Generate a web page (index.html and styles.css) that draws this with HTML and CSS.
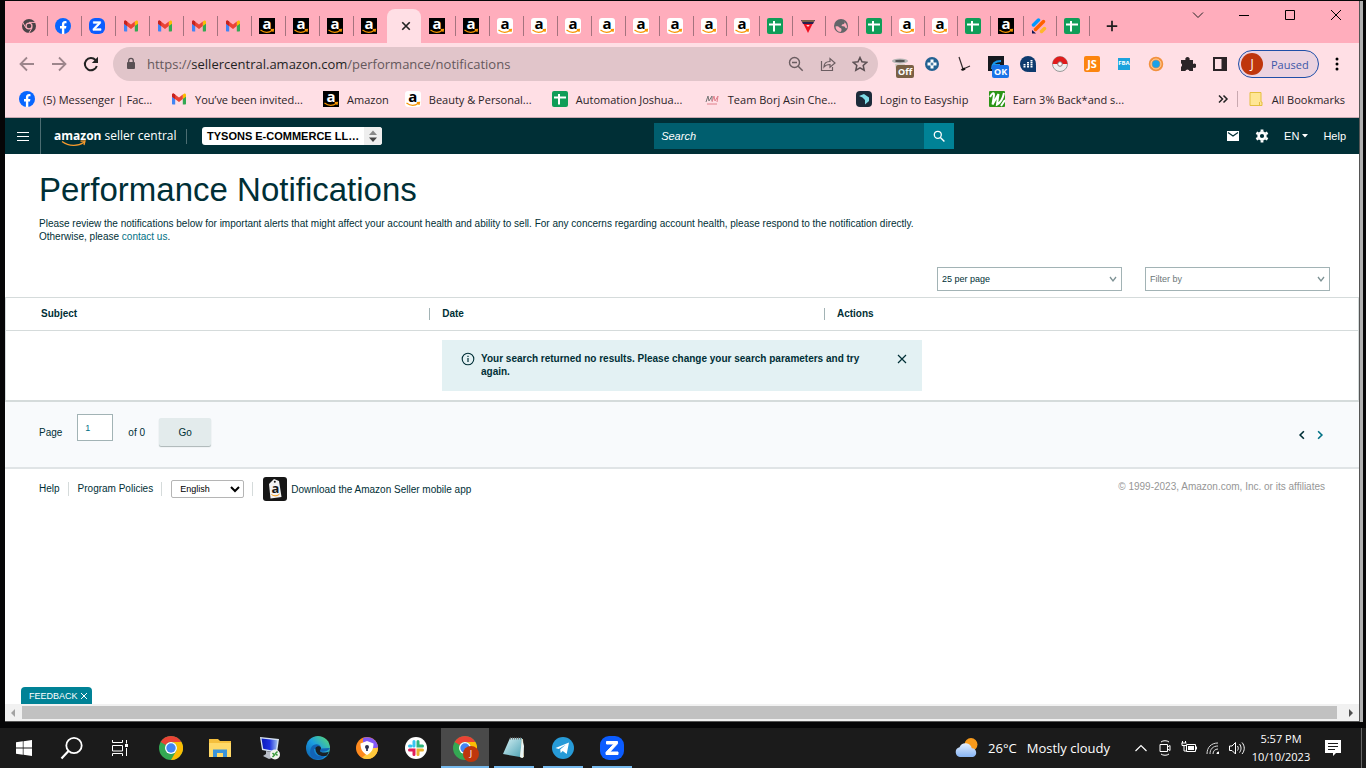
FILE: index.html
```html
<!DOCTYPE html>
<html lang="en">
<head>
<meta charset="utf-8">
<title>Performance Notifications</title>
<link rel="stylesheet" href="styles.css">
</head>
<body>
<svg class="sprite" aria-hidden="true">
  <defs>
    <linearGradient id="g-edge" x1="0" y1="1" x2="1" y2="0"><stop offset="0" stop-color="#0c59a4"/><stop offset=".5" stop-color="#1b9de2"/><stop offset="1" stop-color="#5fe06a"/></linearGradient>
    <linearGradient id="g-cloud" x1="0" y1="0" x2="0" y2="1"><stop offset="0" stop-color="#e4efff"/><stop offset="1" stop-color="#86b4f4"/></linearGradient>
    <linearGradient id="g-screen" x1="0" y1="0" x2="1" y2="0"><stop offset="0" stop-color="#0a1bb8"/><stop offset=".5" stop-color="#1b2fe0"/><stop offset="1" stop-color="#9fc0f0"/></linearGradient>
    <linearGradient id="g-note" x1="0" y1="0" x2="1" y2="1"><stop offset="0" stop-color="#d7f2f5"/><stop offset="1" stop-color="#4fa3b5"/></linearGradient>
  </defs>
  <symbol id="chrome-gray" viewBox="0 0 16 16"><circle cx="8" cy="8" r="7" fill="#4a4347"/><circle cx="8" cy="8" r="3.6" fill="#ffadbc"/><circle cx="8" cy="8" r="2.3" fill="#4a4347"/><path d="M8 4.4h7M4.9 9.8 1.5 4M11.1 9.8 7.7 15.4" stroke="#ffadbc" stroke-width="1"/></symbol>
  <symbol id="facebook" viewBox="0 0 16 16"><circle cx="8" cy="8" r="8" fill="#0866ff"/><path d="M6.9 16V10.400H5V8h1.900V6.700C6.900 4.200 8 3 10.200 3c.5 0 1 .1 1.300.2v2.100h-.9c-1 0-1.300.4-1.300 1.400V8h2.100l-.4 2.400H9.300V16z" fill="#fff"/></symbol>
  <symbol id="zoom-logo" viewBox="0 0 24 24"><rect width="24" height="24" rx="9" fill="#0b5cff"/><path d="M6.500 5.500h11v2.200L9.800 16H18v2.500H6v-2.200L13.800 8H6.500z" fill="#fff" stroke="#fff" stroke-linejoin="round"/></symbol>
  <symbol id="gmail" viewBox="0 0 16 16"><path d="M1 4v8.500c0 .6.400 1 1 1h2.200V7z" fill="#4285f4"/><path d="M15 4v8.500c0 .6-.4 1-1 1h-2.200V7z" fill="#34a853"/><path d="M11.800 3.600 13 2.800c.9-.6 2 0 2 1.200v1.700l-3.200 2.400z" fill="#fbbc04"/><path d="M1 4c0-1.200 1.100-1.800 2-1.200L8 6.600l3.800-3v4.500L8 11 1 5.700z" fill="#ea4335"/><path d="M1 4c0-1.200 1.100-1.800 2-1.200l1.200.8v4.500L1 5.700z" fill="#c5221f"/></symbol>
  <symbol id="smile" viewBox="0 0 16 16"><path d="M1.500 12c4 3 8.500 2.800 12 .2M11.800 11.700l2.600-.2-.5 2.300" fill="none" stroke="currentColor" stroke-width="1.300"/></symbol>
  <symbol id="sheets" viewBox="0 0 16 16"><rect width="16" height="16" rx="2" fill="#0f9d58"/><path d="M2 6.500h12M7 3v10.500" stroke="#fff" stroke-width="2"/></symbol>
  <symbol id="tri" viewBox="0 0 16 16"><path d="M1 2h14l-2 4H3z" fill="#282050"/><path d="M2 3h12" stroke="#caa23a"/><path d="M3.500 6 8 15l4.500-9z" fill="#f01020"/><path d="m6.200 7 1.800 2 1.800-2z" fill="#ffd5dc"/></symbol>
  <symbol id="globe" viewBox="0 0 16 16"><circle cx="8" cy="8" r="7" fill="#636569"/><path d="M2.500 8.500c2-.5 3 0 4 1s2 .5 2 2-.5 2-1 2.500c-3-.3-5-2.500-5-5.500zM8.500 2.500l3.500 1.600-1 2-2 .4-.5 1.500 3 .4 1.500 2 1-1c0-3-2-6-5.500-6.900z" fill="#ffadbc"/></symbol>
  <symbol id="jot" viewBox="0 0 16 16"><path d="M2.500 7 7.500 2" stroke="#0099ff" stroke-width="3.500" stroke-linecap="round"/><path d="m4.500 11.500 8-8" stroke="#ff6100" stroke-width="3.500" stroke-linecap="round"/><path d="m10.500 13.500 3-3" stroke="#ffb629" stroke-width="3.500" stroke-linecap="round"/><path d="M1 12v3.500h4z" fill="#0a1551"/></symbol>
  <symbol id="borj" viewBox="0 0 16 16"><path d="m2 11 2-6 1 5 3-5v5" fill="none" stroke="#777" stroke-width="1"/><path d="m8 11 2-6 1 5 3-5-1 6M3 13h10" fill="none" stroke="#e0808c" stroke-width="1"/></symbol>
  <symbol id="easyship" viewBox="0 0 16 16"><rect width="16" height="16" rx="4" fill="#1c2b3a"/><path d="m3 5 5-2 5 3.500V10l-4 3.500V9L6.500 6.500z" fill="#7fdbe6"/></symbol>
  <symbol id="earn" viewBox="0 0 16 16"><rect width="16" height="16" rx="1" fill="#2b9416"/><path d="M1 6c2-4 4-5 4-2L3.500 13.500 9.500 3 8 13.500c4-2 6-7 7-11.500M12 15l4-6" fill="none" stroke="#fff" stroke-width="2"/></symbol>
  <symbol id="folder-y" viewBox="0 0 14 16"><path d="M1 1.500h11V11h1v3.500H1z" fill="#ffe694" stroke="#e4bf3f"/><path d="M10.500 11v3.500" stroke="#e4bf3f"/></symbol>
  <symbol id="x" viewBox="0 0 16 16"><path d="m3 3 10 10M13 3 3 13" fill="none" stroke="currentColor" stroke-width="2.200"/></symbol>
  <symbol id="chrome" viewBox="0 0 24 24"><circle cx="12" cy="12" r="12" fill="#34a853"/><path d="M12 0a12 12 0 0 1 10.400 6H12a6 6 0 0 0-5.200 3L1.600 6A12 12 0 0 1 12 0z" fill="#ea4335"/><path d="M22.400 6A12 12 0 0 1 12 24l5.200-9A6 6 0 0 0 12 6z" fill="#fbbc04"/><circle cx="12" cy="12" r="6" fill="#fff"/><circle cx="12" cy="12" r="4.700" fill="#4285f4"/></symbol>
</svg>

<div class="desktop">
  <div class="window">
    <header class="tabstrip">
      <nav class="tabs" aria-label="Tabs">
        <button class="tab first" aria-label="Chrome"><svg><use href="#chrome-gray"/></svg></button>
        <button class="tab" aria-label="Facebook"><svg><use href="#facebook"/></svg></button>
        <button class="tab" aria-label="Zoom"><svg><use href="#zoom-logo"/></svg></button>
        <button class="tab" aria-label="Gmail"><svg><use href="#gmail"/></svg></button>
        <button class="tab" aria-label="Gmail"><svg><use href="#gmail"/></svg></button>
        <button class="tab" aria-label="Gmail"><svg><use href="#gmail"/></svg></button>
        <button class="tab" aria-label="Gmail"><svg><use href="#gmail"/></svg></button>
        <button class="tab" aria-label="Amazon"><span class="amz dark">a<svg><use href="#smile"/></svg></span></button>
        <button class="tab" aria-label="Amazon"><span class="amz dark">a<svg><use href="#smile"/></svg></span></button>
        <button class="tab" aria-label="Amazon"><span class="amz dark">a<svg><use href="#smile"/></svg></span></button>
        <button class="tab" aria-label="Amazon"><span class="amz dark">a<svg><use href="#smile"/></svg></span></button>
        <button class="tab active" aria-label="Close tab"><svg><use href="#x"/></svg></button>
        <button class="tab first" aria-label="Amazon"><span class="amz dark">a<svg><use href="#smile"/></svg></span></button>
        <button class="tab" aria-label="Amazon"><span class="amz dark">a<svg><use href="#smile"/></svg></span></button>
        <button class="tab" aria-label="Amazon"><span class="amz">a<svg><use href="#smile"/></svg></span></button>
        <button class="tab" aria-label="Amazon"><span class="amz">a<svg><use href="#smile"/></svg></span></button>
        <button class="tab" aria-label="Amazon"><span class="amz">a<svg><use href="#smile"/></svg></span></button>
        <button class="tab" aria-label="Amazon"><span class="amz">a<svg><use href="#smile"/></svg></span></button>
        <button class="tab" aria-label="Amazon"><span class="amz">a<svg><use href="#smile"/></svg></span></button>
        <button class="tab" aria-label="Amazon"><span class="amz">a<svg><use href="#smile"/></svg></span></button>
        <button class="tab narrow" aria-label="Amazon"><span class="amz">a<svg><use href="#smile"/></svg></span></button>
        <button class="tab narrow" aria-label="Amazon"><span class="amz">a<svg><use href="#smile"/></svg></span></button>
        <button class="tab narrow" aria-label="Sheet"><svg><use href="#sheets"/></svg></button>
        <button class="tab narrow" aria-label="Tool"><svg><use href="#tri"/></svg></button>
        <button class="tab narrow" aria-label="Page"><svg><use href="#globe"/></svg></button>
        <button class="tab narrow" aria-label="Sheet"><svg><use href="#sheets"/></svg></button>
        <button class="tab narrow" aria-label="Amazon"><span class="amz">a<svg><use href="#smile"/></svg></span></button>
        <button class="tab narrow" aria-label="Amazon"><span class="amz">a<svg><use href="#smile"/></svg></span></button>
        <button class="tab narrow" aria-label="Sheet"><svg><use href="#sheets"/></svg></button>
        <button class="tab narrow" aria-label="Amazon"><span class="amz dark">a<svg><use href="#smile"/></svg></span></button>
        <button class="tab narrow" aria-label="Form"><svg><use href="#jot"/></svg></button>
        <button class="tab narrow" aria-label="Sheet"><svg><use href="#sheets"/></svg></button>
        <button class="newtab" aria-label="New tab"><svg viewBox="0 0 16 16"><path d="M8 2v12M2 8h12" stroke="#1f1f1f" stroke-width="2"/></svg></button>
      </nav>
      <div class="controls">
        <button aria-label="Search tabs"><svg viewBox="0 0 12 12"><path d="m1 3.500 5 5 5-5" fill="none" stroke="#222"/></svg></button>
        <button aria-label="Minimize"><svg viewBox="0 0 12 12"><path d="M1 6.500h10" stroke="#000"/></svg></button>
        <button aria-label="Maximize"><svg viewBox="0 0 12 12"><path d="M1.500 1.500h9v9h-9z" fill="none" stroke="#000"/></svg></button>
        <button aria-label="Close"><svg viewBox="0 0 12 12"><path d="m1 1 10 10M11 1 1 11" stroke="#000"/></svg></button>
      </div>
    </header>

    <div class="toolbar">
      <div class="nav-btns">
        <button aria-label="Back" class="dim"><svg viewBox="0 0 16 16"><path d="M15 8H2M8 1.500 1.500 8 8 14.500" fill="none" stroke="currentColor" stroke-width="1.800"/></svg></button>
        <button aria-label="Forward" class="dim"><svg viewBox="0 0 16 16"><path d="M1 8h13M8 1.500 14.500 8 8 14.500" fill="none" stroke="currentColor" stroke-width="1.800"/></svg></button>
        <button aria-label="Reload"><svg viewBox="0 0 16 16"><path d="M13.800 10A6.100 6.100 0 1 1 12.500 4L14 5.700" fill="none" stroke="currentColor" stroke-width="2"/><path d="M15 .800v6.200H8.800z" fill="currentColor"/></svg></button>
      </div>
      <div class="omnibox">
        <svg class="lock" viewBox="0 0 10 14"><rect x="1" y="5" width="8" height="7" rx="1" fill="#5a5054"/><path d="M2.700 6V3.700a2.300 2.300 0 0 1 4.600 0V6" fill="none" stroke="#5a5054" stroke-width="1.300"/></svg>
        <div class="url">https://<b>sellercentral.amazon.com</b>/performance/notifications</div>
        <button aria-label="Zoom"><svg viewBox="0 0 16 16"><circle cx="6.500" cy="6.500" r="5" fill="none" stroke="#6b5d61" stroke-width="1.400"/><path d="M4 6.500h5M10.200 10.200l4.500 4.500" stroke="#6b5d61" stroke-width="1.500"/></svg></button>
        <button aria-label="Share"><svg viewBox="0 0 16 16"><path d="M1.500 5v9.500h11V11M4 11c0-4 2.500-5.500 6-5.500V2.500L15 7l-5 4.300V8.500C7 8.500 5.500 9 4 11z" fill="none" stroke="#6b5d61" stroke-width="1.200"/></svg></button>
        <button aria-label="Bookmark"><svg viewBox="0 0 16 16"><path d="m8 1.500 2 4.300 4.700.5-3.500 3.200 1 4.700L8 11.800l-4.200 2.400 1-4.700L1.300 6.300 6 5.800z" fill="none" stroke="#5b4f53" stroke-width="1.500"/></svg></button>
      </div>
      <div class="exts">
        <button aria-label="Off"><svg viewBox="0 0 16 16"><ellipse cx="8" cy="5" rx="8" ry="2.500" fill="#b5b5b5"/><ellipse cx="8" cy="5" rx="5" ry="1.200" fill="#555"/><path d="M3 8h10l-1 7H4z" fill="#d5d0c8"/></svg><span class="badge off">Off</span></button>
        <button aria-label="Helium"><svg viewBox="0 0 16 16"><circle cx="8" cy="8" r="7" fill="#236192"/><path d="M8 3.500v9M3.500 8h9" stroke="#fff" stroke-width="3"/><path d="M8 6.500v3M6.500 8h3" stroke="#236192" stroke-width="1.200"/></svg></button>
        <button aria-label="Keepa"><svg viewBox="0 0 16 16"><path d="m3 1 4 12M5 14l9-4" stroke="#332b2e" fill="none" stroke-width="1.200"/><path d="m6 14 3-1.500" stroke="#111" stroke-width="2.500"/></svg></button>
        <button aria-label="OK"><svg viewBox="0 0 16 16"><path d="M0 0h16v15H0z" fill="#16191f"/><path d="M4 13c0-5 3-8 9-8M6 9h6" fill="none" stroke="#1797ee" stroke-width="2"/></svg><span class="badge ok">OK</span></button>
        <button aria-label="Market data"><svg viewBox="0 0 16 16"><circle cx="8" cy="8" r="8" fill="#0e3a6e"/><path d="M9 9h7v7H9z" fill="#0e3a6e"/><path d="M4.500 8v4M8 6v6M11.500 4v8" stroke="#fff" stroke-width="2" stroke-dasharray="1.500 .5"/></svg></button>
        <button aria-label="Monitor"><svg viewBox="0 0 16 16"><circle cx="8" cy="8" r="7.500" fill="#eee" stroke="#999"/><path d="M.500 8a7.500 7.500 0 0 1 15 0z" fill="#e01c1c"/><circle cx="8" cy="8" r="2.300" fill="#fff" stroke="#8c7777"/></svg></button>
        <button aria-label="JS"><span class="sq js">JS</span></button>
        <button aria-label="FBA"><span class="sq fba">FBA</span></button>
        <button aria-label="Orb"><svg viewBox="0 0 16 16"><circle cx="8" cy="8" r="5.500" fill="#1ba1e8" stroke="#f2913d" stroke-width="3.500"/><circle cx="8" cy="8" r="5" fill="none" stroke="#ffd0a0"/></svg></button>
        <button aria-label="Extensions"><svg viewBox="0 0 16 16"><path d="M1 4h4.500a2.200 2.200 0 1 1 4 0H13v4a2.200 2.200 0 1 1 0 3.500V15H9.500a2.200 2.200 0 0 0-4.200 0H1v-4a2.200 2.200 0 0 0 0-3.800z" fill="#2b2427"/></svg></button>
        <button aria-label="Side panel"><svg viewBox="0 0 16 16"><path d="M2 2h12v12H2z" fill="#ffdfe5" stroke="#2b2427" stroke-width="2"/><path d="M9.500 2H14v12H9.500z" fill="#2b2427"/></svg></button>
      </div>
      <button class="profile"><span class="avatar">J</span><span>Paused</span></button>
      <button class="menu" aria-label="Menu"><svg viewBox="0 0 16 16"><circle cx="8" cy="3" r="1.500"/><circle cx="8" cy="8" r="1.500"/><circle cx="8" cy="13" r="1.500"/></svg></button>
    </div>

    <nav class="bookmarks" aria-label="Bookmarks">
      <a href="#"><svg><use href="#facebook"/></svg><span class="wide">(5) Messenger | Fac...</span></a>
      <a href="#"><svg><use href="#gmail"/></svg><span class="wide">You’ve been invited...</span></a>
      <a href="#"><span class="amz dark">a<svg><use href="#smile"/></svg></span><span>Amazon</span></a>
      <a href="#"><span class="amz">a<svg><use href="#smile"/></svg></span><span class="mid">Beauty &amp; Personal...</span></a>
      <a href="#"><svg><use href="#sheets"/></svg><span class="wide">Automation Joshua...</span></a>
      <a href="#"><svg><use href="#borj"/></svg><span class="wide">Team Borj Asin Che...</span></a>
      <a href="#"><svg><use href="#easyship"/></svg><span class="short">Login to Easyship</span></a>
      <a href="#"><svg><use href="#earn"/></svg><span>Earn 3% Back*and s...</span></a>
      <button class="more" aria-label="More bookmarks"><svg viewBox="0 0 16 16"><path d="m4 4.500 3.500 3.500L4 11.500M8.500 4.500 12 8l-3.500 3.500" fill="none" stroke="#222" stroke-width="1.500"/></svg></button>
      <a href="#" class="all"><svg><use href="#folder-y"/></svg><span>All Bookmarks</span></a>
    </nav>

    <div class="page">
      <header class="sc-head">
        <button class="burger" aria-label="Menu"><svg viewBox="0 0 12 12"><path d="M0 2.500h12M0 6.500h12M0 10.500h12" stroke="#fff"/></svg></button>
        <a href="#" class="logo"><span><b>amazon</b> seller central</span><svg viewBox="0 0 26 8"><path d="M1 1.500c7 5 16 5 22 .8M19.500 1.200l4.500-.2-1 4" fill="none" stroke="#f79a2c" stroke-width="1.300"/></svg></a>
        <button class="account"><span>TYSONS E-COMMERCE LL…</span><svg viewBox="0 0 18 18"><path d="M0 0h18v18H0z" fill="#eee"/><path d="M5 8h8L9 3.500z" fill="#888"/><path d="M5 10.500h8L9 15z" fill="#444"/></svg></button>
        <form class="search"><input type="text" placeholder="Search" aria-label="Search"><button type="button" aria-label="Search"><svg viewBox="0 0 12 12"><circle cx="4.800" cy="4.800" r="3.500" fill="none" stroke="#fff" stroke-width="1.300"/><path d="m7.400 7.400 4 4" stroke="#fff" stroke-width="1.400"/></svg></button></form>
        <nav class="tools">
          <a href="#" aria-label="Messages"><svg viewBox="0 0 14 14"><path d="M1 2h12v10H1z" fill="#fff"/><path d="m2 3.500 5 3.500 5-3.500" fill="none" stroke="#002f36" stroke-width="1.200"/></svg></a>
          <a href="#" aria-label="Settings"><svg viewBox="0 0 14 14"><circle cx="7" cy="7" r="3.400" fill="none" stroke="#fff" stroke-width="2.600"/><path d="M7 .500v2.200M7 11.300v2.200M1.400 3.700l1.900 1.100M10.700 9.200l1.900 1.100M1.400 10.300l1.900-1.100M10.700 4.800l1.900-1.100" stroke="#fff" stroke-width="2.800"/></svg></a>
          <a href="#" class="lang">EN<svg viewBox="0 0 6 4"><path d="M0 0h6L3 3.500z" fill="#fff"/></svg></a>
          <a href="#">Help</a>
        </nav>
      </header>

      <main>
        <h1>Performance Notifications</h1>
        <p class="intro">Please review the notifications below for important alerts that might affect your account health and ability to sell. For any concerns regarding account health, please respond to the notification directly.<br>Otherwise, please <a href="#">contact us</a>.</p>
        <div class="filters">
          <div class="pick"><select aria-label="Page size"><option>25 per page</option></select><svg viewBox="0 0 8 8"><path d="m1 2 3 4 3-4" fill="none" stroke="#7d9194" stroke-width="1.300"/></svg></div>
          <div class="pick"><select aria-label="Filter" class="muted"><option>Filter by</option></select><svg viewBox="0 0 8 8"><path d="m1 2 3 4 3-4" fill="none" stroke="#7d9194" stroke-width="1.300"/></svg></div>
        </div>
        <table>
          <thead><tr><th class="c1"><span>Subject</span></th><th class="c2"><span>Date</span></th><th><span>Actions</span></th></tr></thead>
          <tbody><tr><td colspan="3">
            <div class="alert" role="status">
              <svg viewBox="0 0 14 14"><circle cx="7" cy="7" r="5.800" fill="none" stroke="#002f36" stroke-width="1.100"/><path d="M7 6v4M7 3.800v1.200" stroke="#002f36" stroke-width="1.200"/></svg>
              <p>Your search returned no results. Please change your search parameters and try again.</p>
              <button aria-label="Dismiss"><svg viewBox="0 0 10 10"><path d="m1 1 8 8M9 1 1 9" stroke="#002f36" stroke-width="1.200"/></svg></button>
            </div>
          </td></tr></tbody>
        </table>
        <div class="pager">
          <label for="pg">Page</label>
          <input id="pg" type="text" value="1">
          <span class="of">of 0</span>
          <button class="go">Go</button>
          <div class="arrows">
            <button aria-label="Previous"><svg viewBox="0 0 8 8"><path d="M5.500 1 2.500 4l3 3" fill="none" stroke="#002f36" stroke-width="1.300"/></svg></button>
            <button aria-label="Next"><svg viewBox="0 0 8 8"><path d="m2.500 1 3 3-3 3" fill="none" stroke="#007185" stroke-width="1.300"/></svg></button>
          </div>
        </div>
      </main>

      <footer>
        <a href="#" class="sep">Help</a>
        <a href="#" class="sep pol">Program Policies</a>
        <div class="sep lng"><select aria-label="Language"><option>English</option></select></div>
        <a href="#" class="app"><svg viewBox="0 0 24 24"><rect width="24" height="24" rx="3" fill="#161616"/><path d="M6 7 11 2l5 2 2.500 16-11 1.500z" fill="#f4f4f4"/><circle cx="11.800" cy="4.700" r="1" fill="#161616"/><text x="12.500" y="15.500" class="app-a">a</text><path d="M8.500 17.500c3 2 6 1.500 8-.5" fill="none" stroke="#f79400"/></svg>Download the Amazon Seller mobile app</a>
        <small>© 1999-2023, Amazon.com, Inc. or its affiliates</small>
      </footer>

      <button class="feedback">FEEDBACK<svg viewBox="0 0 8 8"><path d="m1 1 6 6M7 1 1 7" stroke="#fff"/></svg></button>
      <div class="hscroll">
        <svg viewBox="0 0 17 17"><path d="M10 5v8L6 9z" fill="#a3a3a3"/></svg><div class="thumb"></div><svg class="end" viewBox="0 0 17 17"><path d="M7 5v8l4-4z" fill="#505050"/></svg>
      </div>
    </div>
  </div>
  <div class="behind"></div>
</div>

<div class="taskbar">
  <div class="sys">
    <button aria-label="Start"><svg class="s16" viewBox="0 0 16 16"><path d="M0 2.300 6.800 1.300v6.300H0zM7.500 1.200 16 0v7.600H7.500zM0 8.400h6.800v6.300L0 13.700zM7.500 8.400H16V16l-8.500-1.200z" fill="#fff"/></svg></button>
    <button aria-label="Search"><svg class="s24" viewBox="0 0 24 24"><circle cx="14" cy="9.500" r="7.700" fill="none" stroke="#fff" stroke-width="1.800"/><path d="m8.500 15-7 7.500" stroke="#fff" stroke-width="2.200"/></svg></button>
    <button aria-label="Task view"><svg class="s16" viewBox="0 0 16 16"><path d="M.500 0v2.500h10V0M.500 5.500h10v5.500h-10zM.500 16v-2.500h10V16M14.500 0v3.500M14.500 8v8" fill="none" stroke="#fff"/><path d="M13 4h3v3h-3z" fill="#fff"/></svg></button>
  </div>
  <div class="apps">
    <button aria-label="Chrome"><svg class="s24"><use href="#chrome"/></svg></button>
    <button aria-label="Explorer"><svg class="s24" viewBox="0 0 24 24"><path d="M1 3h9l2 2h11v16H1z" fill="#f5bf3d"/><path d="M1 7h22v14H1z" fill="#ffd968"/><path d="M5 21v-7.500h14V21h-4v-4H9v4z" fill="#3a94db"/></svg></button>
    <button aria-label="Remote desktop"><svg class="s24" viewBox="0 0 24 24"><path d="m3 1 19 2-2 14-15-3z" fill="#d7e3f2"/><path d="m4.500 2.500 16 1.700-1.700 11-12.600-2.500z" fill="url(#g-screen)"/><path d="m9 15 5 1v3l4 2-6 2-6-3 3-2z" fill="#b9bec8"/><circle cx="18" cy="18.500" r="5" fill="#f1f4ef"/><path d="m15.500 17 2 2-2 2M20.500 15.500l-2 2 2 2" fill="none" stroke="#3a9a3a" stroke-width="1.500"/></svg></button>
    <button aria-label="Edge"><svg class="s24" viewBox="0 0 24 24"><circle cx="12" cy="12" r="12" fill="url(#g-edge)"/><path d="M8 13c0 6 5 9 12 6-3 4-8 5-12 3.500S3 15 5.500 11s9-3.500 9.500 1c0 2-1.500 2-1 3 1 1.500 8 1 10-3" fill="#1263b5"/><path d="M9.500 12c1-2.500 5-2.500 5.500 0 0 2-1.500 2-1 3.200 1.500 2 7 1.500 9 .3l-2 4c-6 2-12-1-11.500-7.500z" fill="#1a2026"/></svg></button>
    <button aria-label="VPN"><svg class="s24" viewBox="0 0 24 24"><circle cx="12" cy="12" r="11" fill="#ff8a1e"/><path d="M8 2a11 11 0 0 1 15 9l-5 3L8 6z" fill="#8359f5"/><path d="M23 12A11 11 0 0 1 7 21.800L18 12z" fill="#ffc93c"/><path d="m12 5 6.500 2.500c0 5-1.500 9-6.500 11.500-5-2.500-6.500-6.500-6.500-11.500z" fill="#fff"/><circle cx="12" cy="11" r="2" fill="#2b3150"/><path d="M12 11v4" stroke="#2b3150" stroke-width="1.800"/></svg></button>
    <button aria-label="Slack"><svg class="s24" viewBox="0 0 24 24"><circle cx="12" cy="12" r="11" fill="#fff"/><g fill="none" stroke-width="3" stroke-linecap="round"><path d="M10 5.500v4.500M5.500 10H7" stroke="#36c5f0"/><path d="M14 5.500V10h4.500" stroke="#2eb67d"/><path d="M14 18.500V14h4.500" stroke="#ecb22e"/><path d="M5.500 14H10v4.500" stroke="#e01e5a"/></g></svg></button>
    <button aria-label="Chrome window" class="run on"><svg class="s24"><use href="#chrome"/></svg><span class="mini">J</span></button>
    <button aria-label="Notepad" class="run"><svg class="s24" viewBox="0 0 24 24"><path d="m8 2 13 1 1 18-3 1z" fill="#d9c9a0"/><path d="M8 2h12l-2 19L1 18z" fill="url(#g-note)"/><path d="m20 3-2 18 3 1 1-12z" fill="#e8f5f6"/><path d="M8 2.500h12" stroke="#777" stroke-dasharray="1 1" stroke-width="2"/></svg></button>
    <button aria-label="Telegram" class="run"><svg class="s24" viewBox="0 0 24 24"><circle cx="12" cy="12" r="11" fill="#279bd8"/><path d="m4.500 12 13.500-5.500-2.300 11.500-4-3-2 2-.5-3.500 5.500-4.800-7 4.300z" fill="#fff"/></svg></button>
    <button aria-label="Zoom" class="run"><svg class="s24"><use href="#zoom-logo"/></svg></button>
  </div>
  <div class="tray">
    <button class="weather"><svg class="s24" viewBox="0 0 24 24"><circle cx="17" cy="8.500" r="6.500" fill="#f79a1c"/><path d="M6 21a5 5 0 0 1-.5-9.800 6.500 6.500 0 0 1 12.300 1A4.500 4.500 0 0 1 19 21z" fill="url(#g-cloud)"/></svg><span>26°C</span><span>Mostly cloudy</span></button>
    <button aria-label="Hidden icons"><svg class="s16" viewBox="0 0 16 16"><path d="m2.500 11 5.500-5.500 5.500 5.500" fill="none" stroke="#fff" stroke-width="1.200"/></svg></button>
    <button aria-label="Meet now"><svg class="s16" viewBox="0 0 16 16"><path d="M3 4.500h7.500v7H3zM10.500 7 13 5.500v5L10.500 9M4 2c2-1.700 6-1.700 8 0M4 14c2 1.700 6 1.700 8 0" fill="none" stroke="#fff"/></svg></button>
    <button aria-label="Battery"><svg class="s16" viewBox="0 0 16 16"><path d="M5.500 4.500h9v7h-9zM15.500 6.500v3M.500 3h5M1.500 1v2M4.500 1v2M1 3v2.500h4M3 5.500V11h2.500" fill="none" stroke="#fff"/><path d="M7 6h6v4H7z" fill="#fff"/></svg></button>
    <button aria-label="Network"><svg class="s16" viewBox="0 0 16 16"><path d="M2 14C2 7.500 6 3 13 3M5 14c0-5 3-8 8-8M8 14c0-3 2-5 5-5" fill="none" stroke="#ddd"/><path d="M11.500 14A2.500 2.500 0 0 1 14 11.500V14z" fill="#fff"/></svg></button>
    <button aria-label="Volume"><svg class="s16" viewBox="0 0 16 16"><path d="M.500 6v4.500H3L6.500 14V2.500L3 6z" fill="none" stroke="#fff"/><path d="M8.500 6c1 1.500 1 3 0 4.500M10.500 4c2 2.500 2 6 0 8.500M13 2.500c3 3.500 3 8 0 11.500" fill="none" stroke="#fff"/></svg></button>
    <div class="clock"><span>5:57 PM</span><span>10/10/2023</span></div>
    <button class="notes" aria-label="Notifications"><svg class="s16" viewBox="0 0 16 16"><path d="M0 0h16v13h-5l-3 3v-3H0z" fill="#fff"/><path d="M3 3.500h10M3 6.500h10M3 9.500h7" stroke="#1b1b1b"/></svg></button>
  </div>
</div>
</body>
</html>
```
FILE: styles.css
```css
* { box-sizing: border-box; }
body { margin: 0; height: 100vh; display: flex; flex-direction: column; overflow: hidden; background: #000; font-family: "Open Sans", sans-serif; }
button { margin: 0; padding: 0; border: 0; background: none; font: inherit; color: inherit; display: flex; align-items: center; justify-content: center; }
a { color: inherit; text-decoration: none; }
svg { display: block; flex: none; }
.sprite { width: 0; height: 0; position: absolute; }
.amz { position: relative; flex: none; width: 16px; height: 16px; border-radius: 3px; background: #fff; color: #000; font: bold 15px/10px "Open Sans", sans-serif; text-align: center; }
.amz.dark { border-radius: 0; background: #000; color: #fff; }
.amz svg { position: absolute; left: 0; top: 0; color: #f79400; }
.app-a { font: bold 13px "Open Sans", sans-serif; text-anchor: middle; fill: #161616; }

.desktop { flex: 1; min-height: 0; display: flex; padding: 1px 3px 6px 5px; background: #060607; }
.window { flex: 1; min-width: 0; display: flex; flex-direction: column; background: #ffdfe5; border-bottom: 1px solid #555; }
.behind { width: 4px; background: #b0b0b0; border-left: 1px solid #555; }

.tabstrip { height: 42px; display: flex; background: #ffadbc; }
.tabs { flex: 1; display: flex; align-items: flex-end; padding-left: 8px; }
.tab { position: relative; width: 34px; height: 34px; padding: 0 0 0 8px; justify-content: flex-start; }
.tab svg { width: 16px; height: 16px; }
.tab::before { content: ""; position: absolute; left: 0; top: 7px; width: 1px; height: 20px; background: #a4737e; }
.tab.first::before, .tab.active::before { display: none; }
.tab.active { background: #ffdfe5; border-radius: 8px 8px 0 0; padding: 0 0 0 3px; justify-content: center; color: #222; }
.tab.active svg { width: 12px; height: 12px; }
.tab.narrow { width: 33px; }
.newtab { position: relative; width: 46px; height: 34px; }
.newtab::before { content: ""; position: absolute; left: 0; top: 7px; width: 1px; height: 20px; background: #a4737e; }
.newtab svg { width: 14px; height: 14px; }
.controls { display: flex; height: 28px; }
.controls button { width: 46px; }
.controls svg { width: 12px; height: 12px; }

.toolbar { height: 42px; display: flex; align-items: center; }
.nav-btns { display: flex; width: 108px; padding-left: 6px; }
.nav-btns button { width: 32px; height: 32px; color: #222; }
.nav-btns .dim { color: #9d868c; }
.nav-btns svg { width: 16px; height: 16px; }
.omnibox { flex: 1; min-width: 0; height: 34px; display: flex; align-items: center; padding: 0 2px 0 13px; border-radius: 17px; background: #e1c5ca; font-size: 13px; color: #65585c; }
.lock { width: 10px; height: 14px; margin-right: 11px; }
.url { flex: 1; min-width: 0; white-space: nowrap; overflow: hidden; }
.url b { font-weight: 400; color: #1f1f1f; }
.omnibox button { width: 32px; height: 32px; }
.omnibox button svg { width: 16px; height: 16px; }
.exts { display: flex; padding-left: 6px; }
.exts button { position: relative; width: 32px; height: 32px; }
.exts svg { width: 16px; height: 16px; }
.badge { position: absolute; left: 12px; top: 17px; height: 13px; padding: 0 2px; border-radius: 2px; font: bold 9px/13px "Open Sans", sans-serif; color: #fff; }
.badge.off { background: #7a6045; }
.badge.ok { background: #1a73e8; }
.sq { width: 16px; height: 16px; border-radius: 2px; font: bold 11px/16px "Open Sans", sans-serif; color: #fff; text-align: center; }
.js { background: #fc850f; }
.fba { width: 12px; height: 12px; border-radius: 0; background: #1ca3dd; font-size: 6px; line-height: 10px; }
.profile { width: 81px; height: 28px; margin-left: 2px; padding: 0 2px; justify-content: flex-start; gap: 8px; border: 1px solid #1f4fa8; border-radius: 14px; background: #ecd3e0; color: #3c57a8; font-size: 11px; }
.avatar { width: 22px; height: 22px; border-radius: 50%; background: #bf360c; color: #fff; font-size: 12px; line-height: 22px; text-align: center; }
.menu { width: 40px; height: 32px; padding-right: 4px; }
.menu svg { width: 16px; height: 16px; }

.bookmarks { height: 33px; display: flex; align-items: center; gap: 16px; padding: 0 14px 4px 14px; border-bottom: 1px solid #c9a9b0; font-size: 11px; color: #2b2327; white-space: nowrap; }
.bookmarks a { display: flex; align-items: center; gap: 8px; }
.bookmarks svg { width: 16px; height: 16px; }
.wide { width: 112px; }
.mid { width: 107px; }
.short { width: 93px; }
.more { margin-left: auto; }
.bookmarks .all { height: 16px; padding-left: 10px; border-left: 1px solid #c9a9b0; margin-left: -10px; }

.page { flex: 1; min-height: 0; display: flex; flex-direction: column; background: #fff; font-family: "Liberation Sans", Arial, sans-serif; font-size: 10px; color: #002f36; }
.sc-head { display: grid; grid-template-columns: 36px 146px 15fr 300px 13fr; align-items: center; height: 36px; background: #002f36; color: #fff; font-size: 11px; }
.burger { height: 36px; border-right: 1px solid #4c6d72; }
.burger svg { width: 12px; height: 12px; }
.logo { height: 15px; padding-left: 13px; border-right: 1px solid #4c6d72; font: 12px/13px "Open Sans", sans-serif; white-space: nowrap; }
.logo svg { width: 26px; height: 8px; margin: -2px 0 0 7px; }
.account { width: 180px; height: 18px; margin-left: 15px; padding-left: 5px; justify-content: space-between; border-radius: 3px; background: #fff; color: #000; font-weight: 700; overflow: hidden; white-space: nowrap; }
.account svg { width: 18px; height: 18px; }
.search { display: flex; height: 26px; }
.search input { flex: 1; min-width: 0; padding: 0 7px; border: 0; background: #005e6e; color: #fff; font: italic 11px "Liberation Sans", Arial, sans-serif; }
.search input::placeholder { color: #fff; }
.search button { width: 30px; background: #008296; }
.search button svg { width: 12px; height: 12px; }
.tools { display: flex; justify-content: flex-end; align-items: center; gap: 15px; padding-right: 13px; }
.tools svg { width: 14px; height: 14px; }
.lang { display: flex; align-items: center; gap: 3px; }
.tools .lang svg { width: 6px; height: 4px; }

main { display: block; }
h1 { margin: 17px 0 0 34px; font-size: 33px; line-height: 38px; font-weight: 400; }
.intro { margin: 8px 34px 0; line-height: 13px; }
.intro a { color: #007185; }
.filters { display: flex; justify-content: flex-end; gap: 23px; margin: 24px 29px 6px; }
.pick { display: grid; align-items: center; width: 185px; }
.pick select { grid-area: 1 / 1; width: 100%; height: 24px; padding: 0 4px 1px; appearance: none; border: 1px solid #a2b3b5; border-radius: 0; color: #002f36; font: 9px "Liberation Sans", Arial, sans-serif; background: #fff; }
.pick svg { grid-area: 1 / 1; justify-self: end; width: 8px; height: 8px; margin-right: 5px; pointer-events: none; }
.pick .muted { color: #6c7778; }

table { width: 100%; border-collapse: separate; border-spacing: 0; border: 1px solid #d5dbdb; border-bottom: 2px solid #d5dbdb; table-layout: fixed; }
th { height: 33px; padding: 0; text-align: left; font-size: 10px; border-bottom: 1px solid #d5dbdb; }
th span { display: block; padding-left: 12px; border-left: 1px solid #a2b3b5; line-height: 12px; }
th.c1 { width: 31.3%; }
th.c2 { width: 29.2%; }
.c1 span { padding-left: 35px; border-left: 0; }
td { padding: 9px 0; }
.alert { width: 480px; max-width: 100%; margin: 0 auto; display: flex; align-items: flex-start; padding: 12px 15px 13px 19px; background: #e3f1f3; }
.alert svg { width: 14px; height: 14px; }
.alert p { flex: 1; margin: 0 12px 0 6px; font-size: 10px; line-height: 13px; font-weight: 700; }
.alert button { padding-top: 2px; }
.alert button svg { width: 10px; height: 10px; }

.pager { height: 67px; display: flex; align-items: flex-start; padding: 12px 34px 0; background: #f8fafc; border-bottom: 2px solid #e0e4e6; }
.pager label, .of { padding-top: 13px; line-height: 12px; }
.pager input { width: 36px; height: 27px; margin: 0 15px; padding: 0 7px; border: 1px solid #a2b3b5; color: #007185; font: 9px "Liberation Sans", Arial, sans-serif; background: #fff; }
.go { width: 52px; height: 28px; margin: 4px 0 0 14px; background: #e3ebec; border-radius: 2px; box-shadow: 0 1px 1px #aab4b5; }
.arrows { display: flex; gap: 8px; margin: 16px 0 0 auto; }
.arrows svg { width: 10px; height: 10px; }

footer { display: flex; align-items: center; padding: 8px 34px 0; }
.sep { height: 14px; line-height: 14px; padding-right: 8px; border-right: 1px solid #d5dbdb; }
.pol { padding-left: 9px; }
.lng { display: flex; align-items: center; padding: 0 8px 0 9px; }
.lng select { width: 73px; height: 18px; padding: 0 4px; border: 1px solid #b5b5b5; border-radius: 2px; background: #fff; color: #000; font: 9px "Liberation Sans", Arial, sans-serif; }
.app { display: flex; align-items: center; gap: 4px; margin-left: 10px; }
.app svg { width: 24px; height: 24px; }
footer small { margin-left: auto; padding-bottom: 5px; font-size: 10px; color: #969696; }

.feedback { align-self: flex-start; height: 17px; margin: auto 0 0 16px; padding: 0 4px 0 8px; gap: 2px; border-radius: 4px 4px 0 0; background: #008296; color: #fff; font-size: 9px; }
.feedback svg { width: 8px; height: 8px; }
.hscroll { display: flex; align-items: center; height: 17px; background: #f1f1f1; }
.hscroll svg { width: 17px; height: 17px; }
.hscroll .end { margin-left: 5px; }
.thumb { flex: 1; height: 13px; background: #c1c1c1; }

.taskbar { height: 40px; display: flex; background: #1b1b1b; color: #fff; }
.sys, .apps, .tray { display: flex; }
.sys button, .apps button { width: 48px; height: 40px; }
.apps { gap: 1px; margin-left: 3px; }
.s16 { width: 16px; height: 16px; }
.s24 { width: 24px; height: 24px; }
.run { position: relative; }
.run::after { content: ""; position: absolute; left: 4px; right: 4px; bottom: 0; height: 2px; background: #76b9ed; }
.on { background: #4a4a4a; }
.on::after { left: 0; right: 0; }
.mini { position: absolute; left: 22px; top: 18px; width: 16px; height: 16px; border-radius: 50%; background: #bf360c; font-size: 9px; line-height: 16px; text-align: center; }
.tray { margin-left: auto; padding-right: 4px; }
.tray button { width: 24px; }
.tray .weather { width: auto; gap: 10px; margin-right: 19px; font-size: 13px; }
.clock { width: 64px; display: flex; flex-direction: column; align-items: center; justify-content: center; font-size: 11px; line-height: 18px; }
.tray .notes { width: 49px; padding: 0 20px 0 12px; border-right: 1px solid #666; }
```
